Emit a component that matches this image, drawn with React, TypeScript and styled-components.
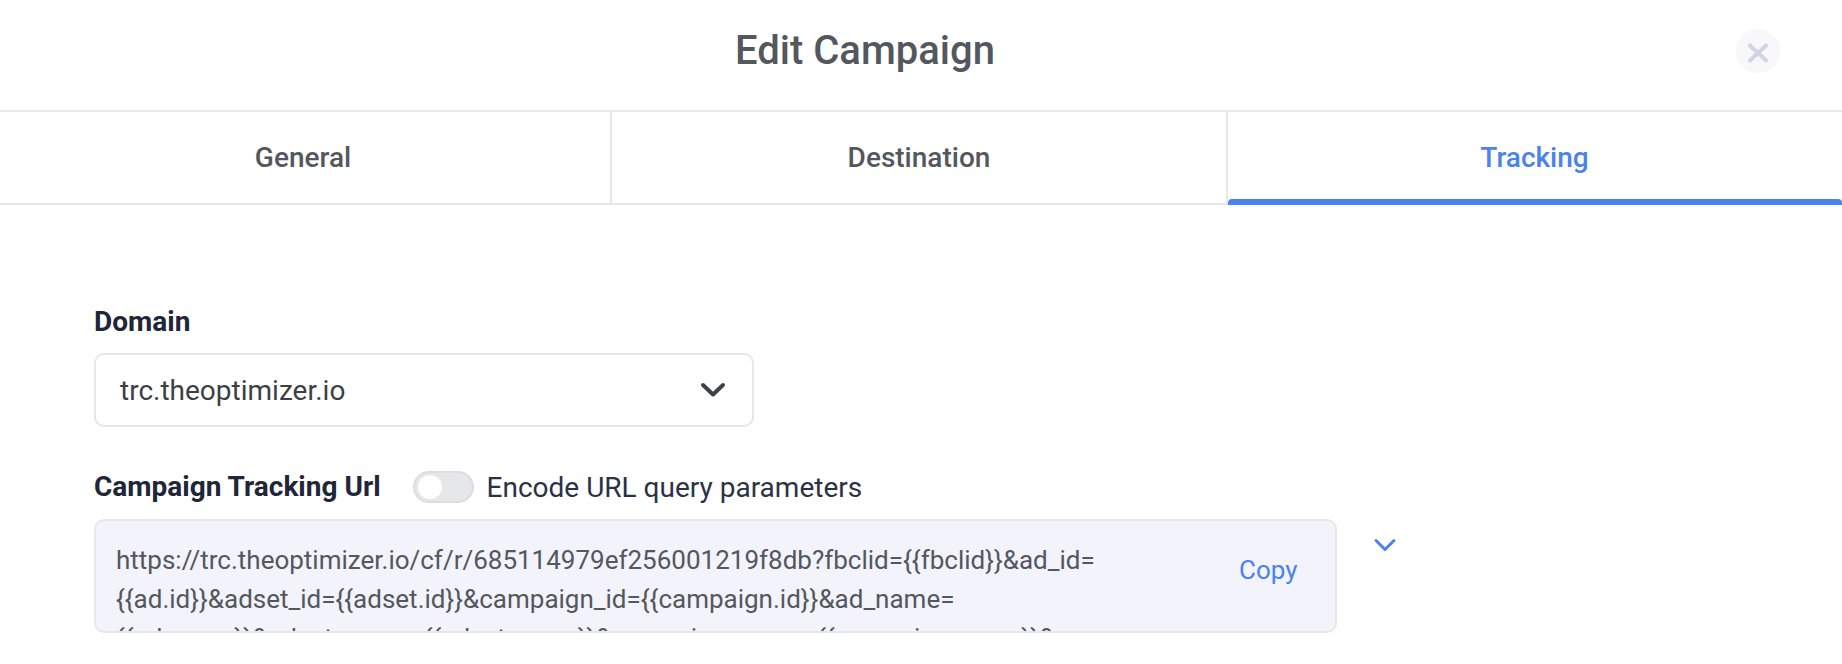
import { createGlobalStyle, styled } from "styled-components";
import { ChevronDown } from "lucide-react";

const GlobalStyle = createGlobalStyle`
  html, body {
    margin: 0;
    padding: 0;
    background: #fff;
  }
  body {
    font-family: Roboto, "Liberation Sans", sans-serif;
  }
`;

const Modal = styled.div`
  width: 1842px;
  height: 664px;
  overflow: hidden;
  background: #fff;
`;

const Header = styled.header`
  position: relative;
  height: 110px;
  padding-right: 112px;
  display: flex;
  align-items: center;
  justify-content: center;
  border-bottom: 2px solid #e6e7e9;
`;

const Title = styled.h1`
  margin: 0 0 10px;
  font-size: 40px;
  font-weight: 500;
  color: #53575e;
`;

const CloseButton = styled.button`
  position: absolute;
  left: 1736px;
  top: 29px;
  width: 44px;
  height: 44px;
  padding: 4px 0 0;
  border: 0;
  border-radius: 50%;
  background: #f8f8fb;
  display: flex;
  align-items: center;
  justify-content: center;
`;

const TabBar = styled.nav`
  display: flex;
  height: 93px;
`;

const Tab = styled.div<{ $active?: boolean; $width: number }>`
  position: relative;
  box-sizing: border-box;
  width: ${(p) => p.$width}px;
  display: flex;
  align-items: center;
  justify-content: center;
  font-size: 28px;
  font-weight: 500;
  color: ${(p) => (p.$active ? "#4a82ee" : "#53575e")};
  border-bottom: 2px solid #e6e7e9;
  & + & {
    border-left: 2px solid #e6e7e9;
  }
  ${(p) =>
    p.$active &&
    `
    &::after {
      content: "";
      position: absolute;
      left: 0;
      right: 0;
      bottom: -2px;
      height: 6px;
      background: #4a82ee;
      border-radius: 4px 4px 0 0;
    }
  `}
`;

const TabLabel = styled.span<{ $shift?: number }>`
  margin-right: ${(p) => p.$shift ?? 0}px;
`;

const Body = styled.main`
  padding: 100px 0 0 94px;
`;

const Label = styled.label`
  display: block;
  font-size: 28px;
  font-weight: 700;
  line-height: 34px;
  color: #1e2639;
`;

const Select = styled.div`
  box-sizing: border-box;
  width: 660px;
  height: 74px;
  margin-top: 14px;
  padding: 0 25px 0 24px;
  display: flex;
  align-items: center;
  justify-content: space-between;
  border: 2px solid #e6e7e9;
  border-radius: 10px;
  font-size: 28px;
  color: #3c3f46;
`;

const ToggleRow = styled.div`
  display: flex;
  align-items: center;
  margin-top: 43px;
  height: 34px;
`;

const Switch = styled.span`
  position: relative;
  box-sizing: border-box;
  width: 61px;
  height: 32px;
  margin-left: 32px;
  margin-right: 13px;
  border: 2px solid #dcdde0;
  border-radius: 16px;
  background: #e6e7ea;
  &::after {
    content: "";
    position: absolute;
    left: 3px;
    top: 2px;
    width: 24px;
    height: 24px;
    border-radius: 50%;
    background: #fff;
  }
`;

const ToggleText = styled.span`
  font-size: 28px;
  color: #2b3245;
`;

const UrlRow = styled.div`
  display: flex;
  align-items: flex-start;
  margin-top: 15px;
`;

const UrlBox = styled.div`
  box-sizing: border-box;
  width: 1243px;
  height: 114px;
  padding: 20px 0 0 20px;
  display: flex;
  overflow: hidden;
  background: #f2f3fb;
  border: 2px solid #e6e7ec;
  border-radius: 10px;
`;

const UrlText = styled.div`
  width: 1000px;
  font-size: 26px;
  line-height: 39px;
  color: #53575e;
  overflow-wrap: anywhere;
`;

const CopyButton = styled.button`
  align-self: flex-start;
  margin: 14px 0 0 123px;
  padding: 0;
  border: 0;
  background: none;
  font: 400 26px Roboto, sans-serif;
  color: #4a82ee;
`;

const ExpandIcon = styled(ChevronDown)`
  margin: 8px 0 0 30px;
  color: #4a82ee;
`;

const TRACKING_URL =
  "https://trc.theoptimizer.io/cf/r/685114979ef256001219f8db?fbclid={{fbclid}}&ad_id={{ad.id}}&adset_id={{adset.id}}&campaign_id={{campaign.id}}&ad_name={{ad.name}}&adset_name={{adset.name}}&campaign_name={{campaign.name}}&\u200Bplacement={{placement}}";

function App() {
  return (
    <>
      <GlobalStyle />
      <Modal>
        <Header>
          <Title>Edit Campaign</Title>
          <CloseButton aria-label="Close">
            <svg width="22" height="20" viewBox="0 0 22 20">
              <path d="M3 2.5 L19 17.5 M19 2.5 L3 17.5" stroke="#d0d5e6" strokeWidth="4" strokeLinecap="round" />
            </svg>
          </CloseButton>
        </Header>
        <TabBar>
          <Tab $width={610}>
            <TabLabel $shift={4}>General</TabLabel>
          </Tab>
          <Tab $width={616}>Destination</Tab>
          <Tab $width={616} $active>
            <TabLabel $shift={1}>Tracking</TabLabel>
          </Tab>
        </TabBar>
        <Body>
          <Label>Domain</Label>
          <Select>
            trc.theoptimizer.io
            <svg width="28" height="16" viewBox="0 0 28 16">
              <path d="M4 3 L14 12.5 L24 3" fill="none" stroke="#3d4149" strokeWidth="4" strokeLinecap="round" strokeLinejoin="round" />
            </svg>
          </Select>
          <ToggleRow>
            <Label>Campaign Tracking Url</Label>
            <Switch />
            <ToggleText>Encode URL query parameters</ToggleText>
          </ToggleRow>
          <UrlRow>
            <UrlBox>
              <UrlText>{TRACKING_URL}</UrlText>
              <CopyButton>Copy</CopyButton>
            </UrlBox>
            <ExpandIcon size={36} strokeWidth={2} />
          </UrlRow>
        </Body>
      </Modal>
    </>
  );
}

export default App;
